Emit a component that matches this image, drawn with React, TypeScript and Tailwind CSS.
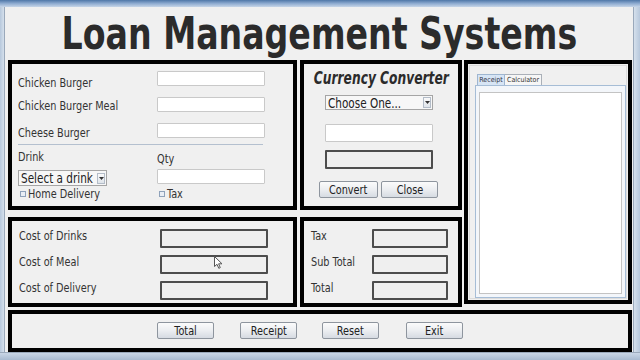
import React from "react";

const inputWhite = "bg-white border border-[#c9c9c9] rounded-[1px]";
const outBox = "h-[19px] border-2 border-[#4d4d4d] bg-[#efefef] rounded-[1px]";
const btn =
  "h-[17px] flex items-center justify-center border border-[#8e959e] rounded-[2px] bg-linear-to-b from-[#fbfbfb] via-[#eceef1] to-[#d6dbe2] text-[13px] text-[#222] leading-none";

function N({ children, center }: { children: React.ReactNode; center?: boolean }) {
  return (
    <span
      className={`inline-block whitespace-nowrap scale-x-[0.83] ${center ? "origin-center" : "origin-left"}`}
    >
      {children}
    </span>
  );
}

function Check({ label }: { label: string }) {
  return (
    <div className="flex items-center h-[14px] text-[13px] text-[#333]">
      <span className="w-[6px] h-[6px] border border-[#8fa2ba] bg-[#e9eef5] mr-[2px] ml-[2px]" />
      <N>{label}</N>
    </div>
  );
}

function SelectBox({ text, w }: { text: string; w: string }) {
  return (
    <div className={`${w} h-full flex items-center border border-[#a5a5a5] bg-[#f7f7f7] pl-[2px] pr-[1px]`}>
      <span className="flex-1 w-0 text-[14px] leading-none text-[#222]">
        <N>{text}</N>
      </span>
      <span className="shrink-0 w-[8px] h-[11px] border border-[#b3bcc8] bg-linear-to-b from-[#fafafa] to-[#dfe4ea] flex items-center justify-center">
        <svg width="5" height="3" viewBox="0 0 5 3">
          <path d="M0 0 L5 0 L2.5 3 Z" fill="#333" />
        </svg>
      </span>
    </div>
  );
}

export default function App() {
  return (
    <div className="relative w-[640px] h-[360px] overflow-hidden bg-[#c6d4e5] font-['DejaVu_Sans_Condensed','DejaVu_Sans',sans-serif]">
      <div className="h-[7px] bg-linear-to-b from-[#4f77a8] via-[#8eabd0] to-[#c7d6e8]" />
      <div className="flex h-[345px]">
        <div className="w-[5px] bg-linear-to-r from-[#b7c8dc] to-[#d5e0ec] border-r border-[#9aa9bb]" />
        <div className="w-[628px] h-full bg-[#f0f0f0] flex flex-col">
          <div className="h-[53px] flex items-center justify-center overflow-visible">
            <span className="inline-block whitespace-nowrap origin-center scale-x-[0.82] font-bold text-[45px] leading-none text-[#2b2b2b]">
              Loan Management Systems
            </span>
          </div>

          <div className="flex pl-[3px]">
            {/* column 1 */}
            <div className="w-[289px] flex flex-col">
              <div className="h-[150px] border-4 border-black flex flex-col pl-[6px] pt-[7px]">
                {[
                  ["Chicken Burger", "pt-[7px]"],
                  ["Chicken Burger Meal", "pt-[2px]"],
                  ["Cheese Burger", "pt-[3px]"],
                ].map(([l, p], i) => (
                  <div key={l} className={`flex items-center h-[15px] ${i > 0 ? "mt-[11px]" : ""}`}>
                    <span className={`w-[139px] text-[13px] leading-[15px] text-[#333] ${p}`}>
                      <N>{l}</N>
                    </span>
                    <div className={`w-[108px] h-[15px] ${inputWhite}`} />
                  </div>
                ))}
                <div className="mt-[6px] h-px w-[245px] bg-[#b4c0cf]" />
                <div className="mt-[5px] h-[14px] flex items-center">
                  <span className="w-[139px] text-[13px] leading-[14px] text-[#333]">
                    <N>Drink</N>
                  </span>
                  <span className="text-[13px] leading-[14px] text-[#333] pt-[4px]">
                    <N>Qty</N>
                  </span>
                </div>
                <div className="mt-[6px] h-[16px] flex items-start">
                  <div className="w-[139px] h-[16px]">
                    <SelectBox text="Select a drink" w="w-[89px]" />
                  </div>
                  <div className={`w-[108px] h-[15px] -mt-px ${inputWhite}`} />
                </div>
                <div className="mt-[1px] flex">
                  <div className="w-[139px]">
                    <Check label="Home Delivery" />
                  </div>
                  <Check label="Tax" />
                </div>
              </div>

              <div className="mt-[7px] h-[90px] border-4 border-black pl-[7px] pt-[7px] flex flex-col gap-[6px]">
                {["Cost of Drinks", "Cost of Meal", "Cost of Delivery"].map((l) => (
                  <div key={l} className="flex items-center h-[20px]">
                    <span className="w-[141px] text-[13px] leading-[15px] text-[#333] pb-[5px]">
                      <N>{l}</N>
                    </span>
                    <div className={`w-[108px] ${outBox}`} />
                  </div>
                ))}
              </div>
            </div>

            {/* column 2 */}
            <div className="ml-[3px] w-[162px] flex flex-col">
              <div className="h-[150px] border-4 border-black flex flex-col">
                <div className="pt-[4px] h-[24px] flex justify-center">
                  <span className="inline-block whitespace-nowrap origin-center scale-x-[0.8] font-bold italic text-[17px] leading-[20px] text-[#2b2b2b]">
                    Currency Converter
                  </span>
                </div>
                <div className="ml-[21px] mt-[7px] h-[15px] w-[108px]">
                  <SelectBox text="Choose One..." w="w-[108px]" />
                </div>
                <div className={`ml-[21px] mt-[14px] h-[18px] w-[108px] ${inputWhite}`} />
                <div className={`ml-[21px] mt-[8px] w-[108px] ${outBox}`} />
                <div className="ml-[15px] mt-[12px] flex gap-[3px]">
                  <div className={`w-[59px] ${btn}`}>
                    <N center>Convert</N>
                  </div>
                  <div className={`w-[57px] ${btn}`}>
                    <N center>Close</N>
                  </div>
                </div>
              </div>

              <div className="mt-[7px] h-[90px] border-4 border-black pl-[7px] pt-[7px] flex flex-col gap-[6px]">
                {["Tax", "Sub Total", "Total"].map((l) => (
                  <div key={l} className="flex items-center h-[20px]">
                    <span className="w-[61px] text-[13px] leading-[15px] text-[#333] pb-[5px]">
                      <N>{l}</N>
                    </span>
                    <div className={`w-[76px] ${outBox}`} />
                  </div>
                ))}
              </div>
            </div>

            {/* column 3 */}
            <div className="ml-[2px] w-[168px] h-[244px] border-4 border-black p-px">
              <div className="h-full border border-[#dcdcdc] bg-[#f0f0f0] flex flex-col pt-[8px]">
                <div className="flex pl-[7px] h-[11px]">
                  <div className="w-[28px] h-[11px] border border-b-0 border-[#9fb6d0] bg-[#d7e5f5] text-[7px] leading-[10px] text-center text-[#334]">
                    Receipt
                  </div>
                  <div className="w-[37px] h-[11px] border border-l-0 border-b-0 border-[#aab0b8] bg-[#f6f6f6] text-[7px] leading-[10px] text-center text-[#333]">
                    Calculator
                  </div>
                </div>
                <div className="ml-[5px] w-[151px] h-[214px] border border-[#a6bdd6] bg-[#f3f6fa] pt-[6px] pl-[3px]">
                  <div className="w-[143px] h-[202px] bg-white border border-[#c3c3c3]" />
                </div>
              </div>
            </div>
          </div>

          <div className="ml-[3px] mt-[3px] w-[624px] h-[42px] border-4 border-black flex pl-[145px] pt-[8px]">
            <div className={`w-[57px] ${btn}`}>
              <N center>Total</N>
            </div>
            <div className={`ml-[26px] w-[57px] ${btn}`}>
              <N center>Receipt</N>
            </div>
            <div className={`ml-[25px] w-[57px] ${btn}`}>
              <N center>Reset</N>
            </div>
            <div className={`ml-[27px] w-[57px] ${btn}`}>
              <N center>Exit</N>
            </div>
          </div>
        </div>
        <div className="w-[7px] bg-linear-to-r from-[#d5e0ec] to-[#b7c8dc] border-l border-[#9aa9bb]" />
      </div>
      <div className="h-[8px] bg-linear-to-b from-[#c9d6e6] to-[#a9bbd1] border-t border-[#9aa9bb]" />

      <svg className="absolute left-[214px] top-[256px]" width="9" height="13" viewBox="0 0 9 13">
        <path d="M0.5 0.5 L0.5 10.5 L3 8.3 L4.8 12.3 L6.3 11.6 L4.6 7.8 L8 7.8 Z" fill="#fff" stroke="#555" strokeWidth="1" />
      </svg>
    </div>
  );
}
